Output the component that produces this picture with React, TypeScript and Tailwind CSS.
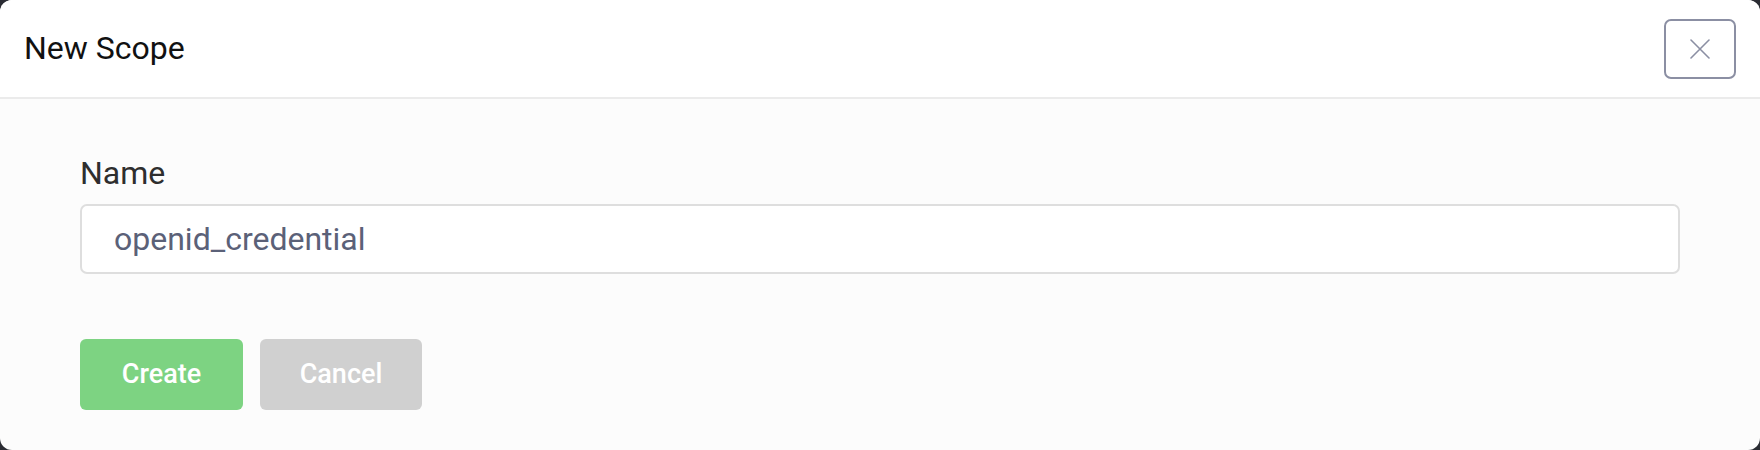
import React from "react";

const TITLE = "New Scope";
const FIELD_LABEL = "Name";
const FIELD_VALUE = "openid_credential";

function CloseIcon() {
  return (
    <svg width="20" height="20" viewBox="0 0 20 20" fill="none" aria-hidden="true">
      <path d="M1 1L19 19M19 1L1 19" stroke="#8b8fa3" strokeWidth="1.6" strokeLinecap="round" />
    </svg>
  );
}

export default function App() {
  return (
    <div className="w-[1760px] h-[450px] bg-[#2a2c33] font-['Roboto','Liberation_Sans',sans-serif]">
      <div className="w-full h-full flex flex-col rounded-[12px] overflow-hidden bg-[#fcfcfc]">
        <header className="h-[99px] shrink-0 flex items-center justify-between pl-[24px] pr-[24px] bg-white border-b-2 border-[#ebebeb]">
          <h2 className="text-[32px] leading-[37px] font-normal text-[#111111]">{TITLE}</h2>
          <button
            type="button"
            aria-label="Close"
            className="w-[72px] h-[60px] flex items-center justify-center rounded-[7px] border-2 border-[#8b8fa3] bg-white"
          >
            <CloseIcon />
          </button>
        </header>

        <div className="flex-1 px-[80px] pt-[56px]">
          <label className="block text-[32px] leading-[37px] text-[#2e2e2e]">{FIELD_LABEL}</label>
          <div className="mt-[12px] h-[70px] flex items-center rounded-[7px] border-2 border-[#dedede] bg-white pl-[32px]">
            <span className="text-[32px] leading-[37px] text-[#5b6178]">{FIELD_VALUE}</span>
          </div>

          <div className="mt-[65px] flex gap-[17px]">
            <button
              type="button"
              className="w-[163px] h-[71px] rounded-[6px] bg-[#7dd382] text-white text-[27px] font-medium"
            >
              Create
            </button>
            <button
              type="button"
              className="w-[162px] h-[71px] rounded-[6px] bg-[#d0d0d0] text-white text-[27px] font-medium"
            >
              Cancel
            </button>
          </div>
        </div>
      </div>
    </div>
  );
}
